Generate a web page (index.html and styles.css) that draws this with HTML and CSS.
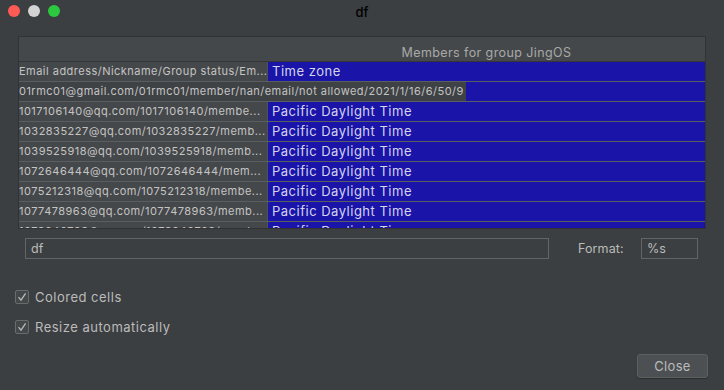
FILE: index.html
```html
<!DOCTYPE html>
<html>
<head>
<meta charset="utf-8">
<link rel="stylesheet" href="styles.css">
</head>
<body>
<div class="window">
  <div class="titlebar">
    <div class="lights">
      <span class="light red"></span>
      <span class="light gray"></span>
      <span class="light green"></span>
    </div>
    <div class="title">df</div>
  </div>
  <div class="content">
    <div class="table">
      <div class="thead">
        <div class="c1"></div>
        <div class="c2 hcell">Members for group JingOS</div>
      </div>
      <div class="row">
        <div class="c1">Email address/Nickname/Group status/Em...</div>
        <div class="c2">Time zone</div>
      </div>
      <div class="row">
        <div class="c1"><span class="overflow">01rmc01@gmail.com/01rmc01/member/nan/email/not allowed/2021/1/16/6/50/9</span></div>
        <div class="c2"></div>
      </div>
      <div class="row">
        <div class="c1">1017106140@qq.com/1017106140/membe...</div>
        <div class="c2">Pacific Daylight Time</div>
      </div>
      <div class="row">
        <div class="c1">1032835227@qq.com/1032835227/memb...</div>
        <div class="c2">Pacific Daylight Time</div>
      </div>
      <div class="row">
        <div class="c1">1039525918@qq.com/1039525918/memb...</div>
        <div class="c2">Pacific Daylight Time</div>
      </div>
      <div class="row">
        <div class="c1">1072646444@qq.com/1072646444/mem...</div>
        <div class="c2">Pacific Daylight Time</div>
      </div>
      <div class="row">
        <div class="c1">1075212318@qq.com/1075212318/membe...</div>
        <div class="c2">Pacific Daylight Time</div>
      </div>
      <div class="row">
        <div class="c1">1077478963@qq.com/1077478963/memb...</div>
        <div class="c2">Pacific Daylight Time</div>
      </div>
      <div class="row">
        <div class="c1">1078046708@qq.com/1078046708/memb...</div>
        <div class="c2">Pacific Daylight Time</div>
      </div>
    </div>
    <div class="formrow">
      <div class="input wide">df</div>
      <div class="label">Format:</div>
      <div class="input small">%s</div>
    </div>
    <div class="checks">
      <label class="check"><span class="box"><svg width="10" height="10" viewBox="0 0 10 10"><path d="M1.5 5.2 L4 8.2 L8.6 1.4" fill="none" stroke="#b8b8b8" stroke-width="1.3"/></svg></span>Colored cells</label>
      <label class="check"><span class="box"><svg width="10" height="10" viewBox="0 0 10 10"><path d="M1.5 5.2 L4 8.2 L8.6 1.4" fill="none" stroke="#b8b8b8" stroke-width="1.3"/></svg></span>Resize automatically</label>
    </div>
    <div class="footer">
      <button class="btn">Close</button>
    </div>
  </div>
</div>
</body>
</html>
```

FILE: styles.css
```css
* { box-sizing: border-box; }
html, body { margin: 0; padding: 0; }
body {
  width: 724px;
  height: 390px;
  background: #3c3f41;
  font-family: "Inter", "Liberation Sans", sans-serif;
  color: #bbbbbb;
  overflow: hidden;
}
.window { width: 724px; height: 390px; display: flex; flex-direction: column; }
.titlebar {
  height: 22px;
  position: relative;
  display: flex;
  align-items: center;
  justify-content: center;
  background: #3c3f41;
}
.lights {
  position: absolute;
  left: 8px;
  top: 5px;
  display: flex;
  gap: 8px;
}
.light { width: 12px; height: 12px; border-radius: 50%; display: block; }
.red { background: #fe5b55; }
.gray { background: #d3d3d3; }
.green { background: #2bc840; }
.title { font-size: 13px; color: #000; font-weight: 500; padding-top: 1px; }
.content { padding: 14px 18px 0 18px; display: flex; flex-direction: column; }
.table {
  width: 688px;
  height: 193px;
  border: 1px solid #323232;
  overflow: hidden;
  background: #45484a;
}
.thead {
  display: flex;
  height: 25px;
  border-bottom: 1px solid #363636;
  background: #45484a;
}
.thead .c1 { width: 249px; }
.hcell {
  flex: 1;
  display: flex;
  align-items: flex-end;
  justify-content: center;
  padding-bottom: 1px;
  font-size: 12.5px;
  letter-spacing: 0.4px;
  color: #a8a8a8;
  background: #45484a;
}
.row {
  display: flex;
  height: 20px;
  border-bottom: 1px solid #5b5e60;
}
.row .c1 {
  width: 249px;
  font-size: 11px;
  line-height: 19px;
  white-space: nowrap;
  overflow: visible;
  padding-left: 0;
  letter-spacing: 0.48px;
  color: #c4c4c4;
  border-right: 1px solid #4f5254;
}
.row .c2 {
  flex: 1;
  background: #1b14a8;
  font-size: 13px;
  line-height: 19px;
  padding-left: 4px;
  color: #d4d4e8;
  letter-spacing: 0.5px;
}
.overflow {
  position: relative;
  z-index: 1;
  display: inline-block;
  background: #3f4244;
  padding-right: 2px;
  height: 19px;
}
.formrow {
  display: flex;
  align-items: center;
  margin-top: 9px;
  padding-left: 7px;
  height: 21px;
}
.input {
  height: 21px;
  border: 1px solid #646464;
  font-size: 12.5px;
  line-height: 19px;
  padding-left: 5px;
  color: #bbbbbb;
  background: #3c3f41;
}
.wide { width: 524px; }
.label { margin-left: 29px; font-size: 12.5px; width: 63px; color: #bbbbbb; letter-spacing: 0.1px; }
.small { width: 57px; }
.checks {
  display: flex;
  flex-direction: column;
  gap: 16px;
  margin-top: 31px;
  margin-left: -3px;
}
.check {
  display: flex;
  align-items: center;
  font-size: 13px;
  letter-spacing: 0.5px;
  height: 14px;
  color: #bbbbbb;
}
.box {
  width: 14px;
  height: 14px;
  border: 1px solid #6b6b6b;
  border-radius: 2px;
  margin-right: 6px;
  display: flex;
  align-items: center;
  justify-content: center;
  background: #43494a;
}
.footer { display: flex; justify-content: flex-end; margin-top: 20px; }
.btn {
  width: 71px;
  height: 24px;
  background: #4c5052;
  border: 1px solid #5e6060;
  border-radius: 3px;
  color: #bbbbbb;
  font-family: "Inter", "Liberation Sans", sans-serif;
  font-size: 13px;
  letter-spacing: 0.3px;
  margin-right: -2px;
  box-shadow: 0 1px 1px rgba(0,0,0,0.3);
}
```
